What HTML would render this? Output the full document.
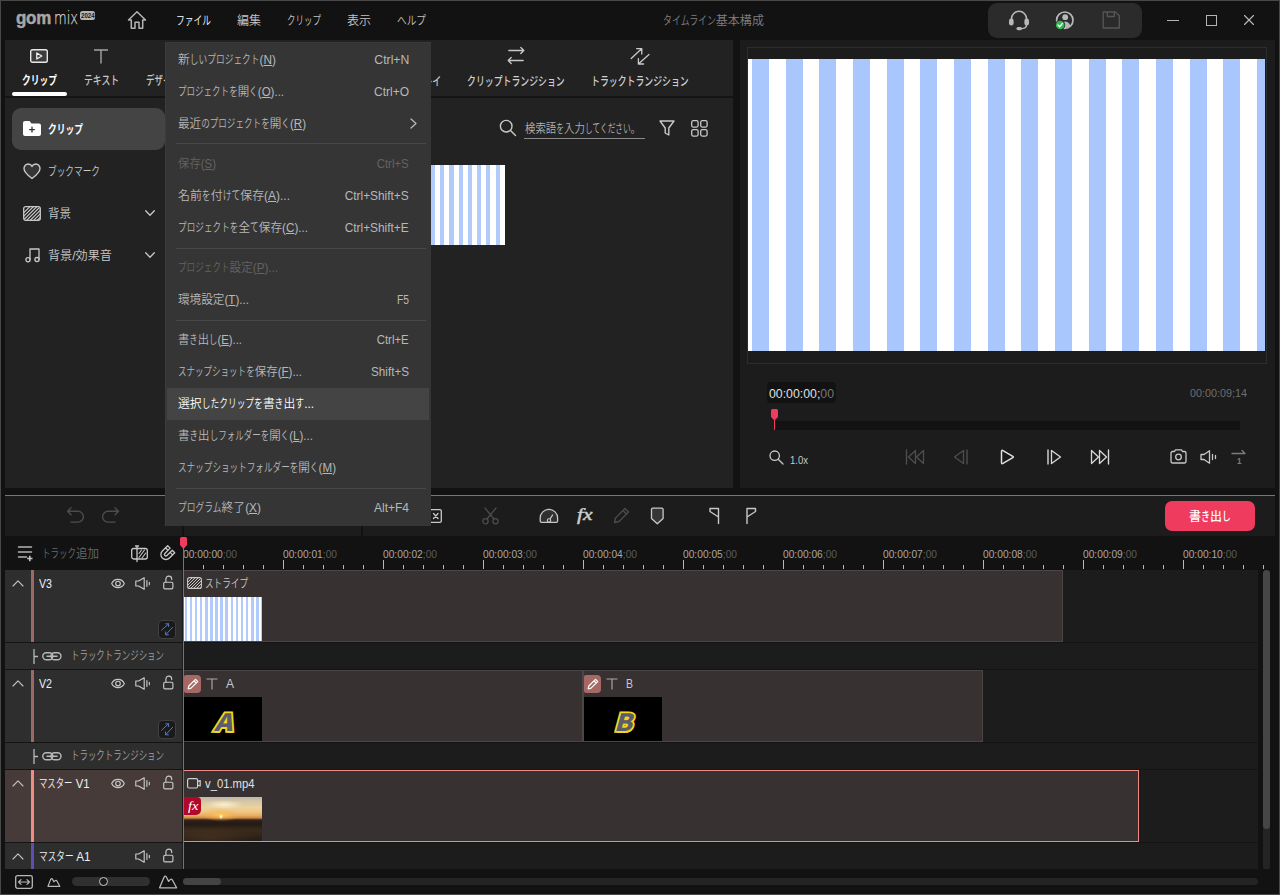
<!DOCTYPE html>
<html lang="ja"><head><meta charset="utf-8"><title>GOM Mix</title>
<style>
*{margin:0;padding:0;box-sizing:border-box}
html,body{width:1280px;height:895px;overflow:hidden;background:#121212}
body{position:relative;font-family:"Liberation Sans","Noto Sans CJK JP",sans-serif;font-size:12px;color:#ccc}
.a{position:absolute}
.t{font-weight:350;position:absolute;white-space:nowrap;line-height:20px;height:20px;transform-origin:0 50%}
svg{position:absolute;overflow:visible}
u{text-decoration:underline;text-underline-offset:1px}
.d{color:#777}
.k{display:inline-block;transform:scaleX(.74);transform-origin:0 50%}

</style></head>
<body>
<div class="a" style="left:0px;top:0px;width:1280px;height:895px;background:#121212;"></div>
<div class="a" style="left:0px;top:0px;width:1280px;height:1px;background:#484848;"></div>
<div class="a" style="left:0px;top:0px;width:1px;height:895px;background:#484848;"></div>
<div class="a" style="left:1279px;top:0px;width:1px;height:895px;background:#484848;"></div>
<div class="a" style="left:0px;top:894px;width:1280px;height:1px;background:#484848;"></div>
<span class="t" id="L0" style="left:16px;top:7.600000000000001px;font-size:19px;color:#a6a6a6;font-weight:700;font-family:'Liberation Sans',sans-serif;transform:scaleX(0.892);letter-spacing:-0.3px;-webkit-text-stroke:0.5px #a6a6a6;">gom</span>
<span class="t" id="L1" style="left:53.5px;top:7.5px;font-size:18px;color:#d4d4d4;font-weight:200;font-family:'DejaVu Sans',sans-serif;transform:scaleX(0.723);-webkit-text-stroke:0.25px #d4d4d4;">mix</span>
<div class="a" style="left:80px;top:11px;width:15px;height:8.5px;background:#b4b4b4;border-radius:2.5px;"></div>
<span class="t" id="L2" style="left:81px;top:5.5px;font-size:7px;color:#141414;font-weight:700;font-family:'Liberation Sans',sans-serif;transform:scaleX(0.867);">2024</span>
<svg style="left:127px;top:10px;" width="20" height="20" viewBox="0 0 20 20" fill="none" stroke-linecap="round" stroke-linejoin="round"><path d="M1.5 10 L10 1.8 L18.5 10 H15.7 V18.3 H12 V12.3 H8 V18.3 H4.3 V10 Z" stroke="#b4b4b4" stroke-width="1.5"/></svg>
<span class="t" id="L3" style="left:176px;top:11.0px;font-size:12px;color:#ffffff;transform:scaleX(0.985);"><span class="k" style="margin-right:-12.48px">ファイル</span></span>
<span class="t" id="L4" style="left:237px;top:11.0px;font-size:12px;color:#c4c4c4;">編集</span>
<span class="t" id="L5" style="left:287px;top:11.0px;font-size:12px;color:#c4c4c4;transform:scaleX(0.956);"><span class="k" style="margin-right:-12.48px">クリップ</span></span>
<span class="t" id="L6" style="left:347px;top:11.0px;font-size:12px;color:#c4c4c4;">表示</span>
<span class="t" id="L7" style="left:397px;top:11.0px;font-size:12px;color:#c4c4c4;transform:scaleX(1.088);"><span class="k" style="margin-right:-9.36px">ヘルプ</span></span>
<span class="t" id="L8" style="left:663px;top:11.0px;font-size:12px;color:#808080;transform:scaleX(1.005);"><span class="k" style="margin-right:-18.72px">タイムライン</span>基本構成</span>
<div class="a" style="left:988px;top:2.5px;width:154px;height:35px;background:#2b2b2b;border-radius:9px;"></div>
<svg style="left:1008px;top:9px;" width="22" height="22" viewBox="0 0 22 22" fill="none" stroke-linecap="round" stroke-linejoin="round"><path d="M3.5 12 V9.8 a7.5 7.5 0 0 1 15 0 V12" stroke="#b8b8b8" stroke-width="1.6"/><rect x="1" y="9.5" width="4.6" height="7" rx="2.2" fill="#b8b8b8"/><rect x="16.4" y="9.5" width="4.6" height="7" rx="2.2" fill="#b8b8b8"/><path d="M18.5 16 q0 3.6 -5.5 3.6" stroke="#b8b8b8" stroke-width="1.4"/><rect x="8.5" y="18" width="5.5" height="3.2" rx="1.6" fill="#b8b8b8"/></svg>
<svg style="left:1054px;top:9px;" width="22" height="22" viewBox="0 0 22 22" fill="none" stroke-linecap="round" stroke-linejoin="round"><defs><clipPath id="uc"><circle cx="10.8" cy="11.2" r="8"/></clipPath></defs><circle cx="10.8" cy="11.2" r="8.2" stroke="#b8b8b8" stroke-width="1.7"/><circle cx="11.2" cy="8.2" r="2.9" fill="#b8b8b8"/><path d="M5.5 20 q0.5 -7.5 5.7 -7.5 q5.2 0 5.7 7.5 Z" fill="#b8b8b8" clip-path="url(#uc)"/><circle cx="6.2" cy="16" r="5" fill="#2b2b2b"/><circle cx="6.2" cy="16" r="4.3" fill="#2dbb4e"/><path d="M4 16 l1.6 1.7 l2.8 -3.2" stroke="#fff" stroke-width="1.3"/></svg>
<svg style="left:1102px;top:11px;" width="19" height="18" viewBox="0 0 19 18" fill="none" stroke-linecap="round" stroke-linejoin="round"><path d="M1.2 1 H13.5 L17.3 4.8 V17 H1.2 Z M5.3 1 V5.5 H12.3 V1" stroke="#555" stroke-width="1.4"/></svg>
<div class="a" style="left:1167px;top:20px;width:12px;height:1px;background:#b4b4b4;"></div>
<div class="a" style="left:1205.5px;top:14.5px;width:11px;height:11px;background:transparent;border:1.2px solid #b4b4b4;"></div>
<svg style="left:1244px;top:15px;" width="10" height="10" viewBox="0 0 10 10" fill="none" stroke-linecap="round" stroke-linejoin="round"><path d="M0.5 0.5 L9.5 9.5 M9.5 0.5 L0.5 9.5" stroke="#bcbcbc" stroke-width="1.1"/></svg>
<div class="a" style="left:5px;top:40px;width:728px;height:448px;background:#222222;"></div>
<div class="a" style="left:5px;top:96px;width:728px;height:2px;background:#141414;"></div>
<svg style="left:30px;top:49px;" width="18" height="14" viewBox="0 0 18 14" fill="none" stroke-linecap="round" stroke-linejoin="round"><rect x="0.7" y="0.7" width="16.6" height="12.6" rx="1.8" fill="#3c3c3c" stroke="#e8e8e8" stroke-width="1.4"/><path d="M6.8 4 L11.8 7 L6.8 10 Z" stroke="#f0f0f0" stroke-width="1.3"/></svg>
<span class="t" id="L9" style="left:22px;top:71.0px;font-size:12px;color:#ffffff;font-weight:700;transform:scaleX(0.985);"><span class="k" style="margin-right:-12.48px">クリップ</span></span>
<div class="a" style="left:12px;top:92px;width:55px;height:4px;background:#ffffff;border-radius:2px;"></div>
<svg style="left:93px;top:48px;" width="16" height="16" viewBox="0 0 16 16" fill="none" stroke-linecap="round" stroke-linejoin="round"><path d="M1 2 H15 M8 2 V15.5" stroke="#a4a4a4" stroke-width="1.4" stroke-linecap="butt"/></svg>
<span class="t" id="L10" style="left:84px;top:71.0px;font-size:12px;color:#c8c8c8;font-weight:500;transform:scaleX(0.995);"><span class="k" style="margin-right:-12.48px">テキスト</span></span>
<span class="t" id="L11" style="left:146px;top:71.0px;font-size:12px;color:#c8c8c8;font-weight:500;transform:scaleX(0.956);"><span class="k" style="margin-right:-12.48px">デザイン</span></span>
<span class="t" id="L12" style="left:387.5px;top:72.0px;font-size:12px;color:#c8c8c8;font-weight:500;"><span class="k" style="margin-right:-18.72px">オーバーレイ</span></span>
<svg style="left:507px;top:46px;" width="18" height="18" viewBox="0 0 18 18" fill="none" stroke-linecap="round" stroke-linejoin="round"><path d="M1.8 4.5 H16.8 M13.8 1.5 L16.8 4.5 L13.8 7.5 M16.2 14.5 H1.2 M4.2 11.5 L1.2 14.5 L4.2 17.5" stroke="#c8c8c8" stroke-width="1.3"/></svg>
<span class="t" id="L13" style="left:467px;top:72.0px;font-size:12px;color:#d0d0d0;font-weight:500;"><span class="k" style="margin-right:-34.32px">クリップトランジション</span></span>
<svg style="left:629px;top:46px;" width="22" height="20" viewBox="0 0 22 20" fill="none" stroke-linecap="round" stroke-linejoin="round"><path d="M2.2 12.5 L12.8 2.6 M7.6 2.6 H12.8 V8 M20 8.5 L9.4 18 M14.6 18 H9.4 V12.6" stroke="#c8c8c8" stroke-width="1.3"/></svg>
<span class="t" id="L14" style="left:591px;top:72.0px;font-size:12px;color:#d0d0d0;font-weight:500;"><span class="k" style="margin-right:-34.32px">トラックトランジション</span></span>
<div class="a" style="left:12px;top:108px;width:153px;height:42px;background:#444444;border-radius:9px;"></div>
<svg style="left:23px;top:121px;" width="18" height="15" viewBox="0 0 18 15" fill="none" stroke-linecap="round" stroke-linejoin="round"><path d="M0 2 a2 2 0 0 1 2 -2 H6.5 L8.5 2.5 H16 a2 2 0 0 1 2 2 V13 a2 2 0 0 1 -2 2 H2 a2 2 0 0 1 -2 -2 Z" fill="#fff"/><path d="M9 6.2 V11 M6.6 8.6 H11.4" stroke="#333" stroke-width="1.3"/></svg>
<span class="t" id="L15" style="left:48px;top:120.0px;font-size:12px;color:#ffffff;font-weight:700;transform:scaleX(0.985);"><span class="k" style="margin-right:-12.48px">クリップ</span></span>
<svg style="left:23px;top:163px;" width="18" height="17" viewBox="0 0 18 17" fill="none" stroke-linecap="round" stroke-linejoin="round"><path d="M9 15.5 C3 11 1 8.5 1 5.5 C1 3 3 1 5.2 1 C7 1 8.3 2 9 3.4 C9.7 2 11 1 12.8 1 C15 1 17 3 17 5.5 C17 8.5 15 11 9 15.5 Z" fill="#363636" stroke="#c8c8c8" stroke-width="1.4"/></svg>
<span class="t" id="L16" style="left:48px;top:162.0px;font-size:12px;color:#c8c8c8;transform:scaleX(0.976);"><span class="k" style="margin-right:-18.72px">ブックマーク</span></span>
<svg style="left:23px;top:206px;" width="18" height="15" viewBox="0 0 18 15" fill="none" stroke-linecap="round" stroke-linejoin="round"><defs><clipPath id="hc"><rect x="1" y="1" width="16" height="13" rx="1.5"/></clipPath></defs><rect x="0.7" y="0.7" width="16.6" height="13.6" rx="2" stroke="#c8c8c8" stroke-width="1.3"/><g clip-path="url(#hc)" stroke="#c8c8c8" stroke-width="1.2"><path d="M-4 15 L11 0 M-0.5 15 L14.5 0 M3 15 L18 0 M6.5 15 L21.5 0 M10 15 L25 0 M13.5 15 L28.5 0 M-7.5 15 L7.5 0"/></g></svg>
<span class="t" id="L17" style="left:48px;top:204.0px;font-size:12px;color:#c8c8c8;transform:scaleX(0.958);">背景</span>
<svg style="left:145px;top:210px;" width="10" height="7" viewBox="0 0 10 7" fill="none" stroke-linecap="round" stroke-linejoin="round"><path d="M0.7 0.8 L5 5.2 L9.3 0.8" stroke="#c8c8c8" stroke-width="1.3"/></svg>
<svg style="left:24.5px;top:248px;" width="16" height="15" viewBox="0 0 16 15" fill="none" stroke-linecap="round" stroke-linejoin="round"><path d="M5 11.5 V1 H14 V11.3" stroke="#c8c8c8" stroke-width="1.3"/><circle cx="3" cy="11.8" r="2.1" stroke="#c8c8c8" stroke-width="1.3"/><circle cx="12" cy="11.6" r="2.1" stroke="#c8c8c8" stroke-width="1.3"/></svg>
<span class="t" id="L18" style="left:48px;top:246.0px;font-size:12px;color:#c8c8c8;transform:scaleX(1.010);">背景/効果音</span>
<svg style="left:145px;top:252px;" width="10" height="7" viewBox="0 0 10 7" fill="none" stroke-linecap="round" stroke-linejoin="round"><path d="M0.7 0.8 L5 5.2 L9.3 0.8" stroke="#c8c8c8" stroke-width="1.3"/></svg>
<svg style="left:499px;top:119px;" width="18" height="18" viewBox="0 0 18 18" fill="none" stroke-linecap="round" stroke-linejoin="round"><circle cx="7.2" cy="7.2" r="5.8" stroke="#c8c8c8" stroke-width="1.4"/><path d="M11.5 11.5 L16.5 16.5" stroke="#c8c8c8" stroke-width="1.4"/></svg>
<span class="t" id="L19" style="left:525px;top:119.0px;font-size:12px;color:#b0b0b0;transform:scaleX(0.869);">検索語<span class="k" style="margin-right:-3.12px">を</span>入力<span class="k" style="margin-right:-18.72px">してください</span>。</span>
<div class="a" style="left:524px;top:138px;width:121px;height:1px;background:#8a8a8a;"></div>
<svg style="left:659px;top:120px;" width="16" height="17" viewBox="0 0 16 17" fill="none" stroke-linecap="round" stroke-linejoin="round"><path d="M1 1 H15 L9.8 8 V15 L6.2 13 V8 Z" stroke="#c8c8c8" stroke-width="1.4"/></svg>
<svg style="left:691px;top:120px;" width="17" height="17" viewBox="0 0 17 17" fill="none" stroke-linecap="round" stroke-linejoin="round"><rect x="0.7" y="0.7" width="6.4" height="6.4" rx="1.5" stroke="#c8c8c8" stroke-width="1.3"/><rect x="9.7" y="0.7" width="6.4" height="6.4" rx="1.5" stroke="#c8c8c8" stroke-width="1.3"/><rect x="0.7" y="9.7" width="6.4" height="6.4" rx="1.5" stroke="#c8c8c8" stroke-width="1.3"/><rect x="9.7" y="9.7" width="6.4" height="6.4" rx="1.5" stroke="#c8c8c8" stroke-width="1.3"/></svg>
<div class="a" style="left:365px;top:165px;width:140px;height:80px;background:#fff;background:repeating-linear-gradient(90deg,#fff 0,#fff 1.6px,#b0cbfc 1.6px,#b0cbfc 5.7px,#fff 5.7px,#fff 9.21px);"></div>
<div class="a" style="left:740px;top:40px;width:535px;height:448px;background:#1c1c1c;"></div>
<div class="a" style="left:747px;top:47px;width:520px;height:317px;background:#1c1c1c;border:1px solid #2d2d2d;"></div>
<div class="a" style="left:748px;top:59px;width:517px;height:292px;background:#fff;background:repeating-linear-gradient(90deg,#fff 0,#fff 4px,#aac7fd 4px,#aac7fd 20.9px,#fff 20.9px,#fff 33.67px);"></div>
<div class="a" style="left:767px;top:382px;width:69px;height:21px;background:#121212;border-radius:4px;"></div>
<span class="t" id="L20" style="left:769px;top:384.0px;font-size:12px;color:#e0e0e0;font-family:'Liberation Sans',sans-serif;transform:scaleX(1.025);">00:00:00;<span style="color:#777">00</span></span>
<span class="t" id="L21" style="left:1190px;top:383.0px;font-size:11px;color:#6e6e6e;font-family:'Liberation Sans',sans-serif;transform:scaleX(0.981);">00:00:09;14</span>
<div class="a" style="left:774px;top:421px;width:466px;height:9px;background:#121212;"></div>
<svg style="left:771px;top:409px;" width="7" height="21" viewBox="0 0 7 21" fill="none" stroke-linecap="round" stroke-linejoin="round"><path d="M0 1.5 a1.5 1.5 0 0 1 1.5 -1.5 H5.5 a1.5 1.5 0 0 1 1.5 1.5 V8 L4 11 H3 L0 8 Z" fill="#ef3b5d"/><path d="M3.5 10 V21" stroke="#ef3b5d" stroke-width="1" stroke-linecap="butt"/></svg>
<svg style="left:769px;top:450px;" width="15" height="15" viewBox="0 0 15 15" fill="none" stroke-linecap="round" stroke-linejoin="round"><circle cx="5.7" cy="5.7" r="4.7" stroke="#c8c8c8" stroke-width="1.3"/><path d="M9.2 9.2 L14 14" stroke="#c8c8c8" stroke-width="1.3"/></svg>
<span class="t" id="L22" style="left:790px;top:450.0px;font-size:11px;color:#c8c8c8;font-family:'Liberation Sans',sans-serif;transform:scaleX(0.866);">1.0x</span>
<svg style="left:905px;top:449px;" width="20" height="16" viewBox="0 0 20 16" fill="none" stroke-linecap="round" stroke-linejoin="round"><path d="M1.5 1 V15" stroke="#4e4e4e" stroke-width="1.4"/><path d="M10.5 1.5 L3.5 8 L10.5 14.5 Z" stroke="#4e4e4e" stroke-width="1.3"/><path d="M18.5 1.5 L11.5 8 L18.5 14.5 Z" stroke="#4e4e4e" stroke-width="1.3"/></svg>
<svg style="left:953px;top:449px;" width="16" height="16" viewBox="0 0 16 16" fill="none" stroke-linecap="round" stroke-linejoin="round"><path d="M10.5 1.5 L1.5 8 L10.5 14.5 Z" stroke="#4e4e4e" stroke-width="1.3"/><path d="M14 1 V15" stroke="#4e4e4e" stroke-width="1.4"/></svg>
<svg style="left:1000px;top:449px;" width="15" height="17" viewBox="0 0 15 17" fill="none" stroke-linecap="round" stroke-linejoin="round"><path d="M1.5 2.5 Q1.5 0.8 3 1.6 L12.8 7.3 Q13.8 8 12.8 8.7 L3 14.4 Q1.5 15.2 1.5 13.5 Z" stroke="#e0e0e0" stroke-width="1.5"/></svg>
<svg style="left:1045.5px;top:449px;" width="16" height="16" viewBox="0 0 16 16" fill="none" stroke-linecap="round" stroke-linejoin="round"><path d="M2 1 V15" stroke="#d8d8d8" stroke-width="1.4"/><path d="M5.5 1.5 L14.5 8 L5.5 14.5 Z" stroke="#d8d8d8" stroke-width="1.3"/></svg>
<svg style="left:1090px;top:449px;" width="20" height="16" viewBox="0 0 20 16" fill="none" stroke-linecap="round" stroke-linejoin="round"><path d="M1.5 1.5 L8.5 8 L1.5 14.5 Z" stroke="#d8d8d8" stroke-width="1.3"/><path d="M9.5 1.5 L16.5 8 L9.5 14.5 Z" stroke="#d8d8d8" stroke-width="1.3"/><path d="M18.5 1 V15" stroke="#d8d8d8" stroke-width="1.4"/></svg>
<svg style="left:1170px;top:449px;" width="17" height="15" viewBox="0 0 17 15" fill="none" stroke-linecap="round" stroke-linejoin="round"><path d="M1 4 a1.5 1.5 0 0 1 1.5 -1.5 H4.5 L5.5 0.8 H11.5 L12.5 2.5 H14.5 a1.5 1.5 0 0 1 1.5 1.5 V12.5 a1.5 1.5 0 0 1 -1.5 1.5 H2.5 a1.5 1.5 0 0 1 -1.5 -1.5 Z" stroke="#c8c8c8" stroke-width="1.3"/><circle cx="8.5" cy="8" r="2.8" stroke="#c8c8c8" stroke-width="1.3"/></svg>
<svg style="left:1200px;top:450px;" width="17" height="14" viewBox="0 0 17 14" fill="none" stroke-linecap="round" stroke-linejoin="round"><path d="M1 4.5 H4 L9.5 0.8 V13.2 L4 9.5 H1 Z" stroke="#c8c8c8" stroke-width="1.3"/><path d="M12.5 4.5 V9.5 M15.5 5.5 V8.5" stroke="#c8c8c8" stroke-width="1.3"/></svg>
<svg style="left:1231px;top:449px;" width="16" height="16" viewBox="0 0 16 16" fill="none" stroke-linecap="round" stroke-linejoin="round"><path d="M1 4.5 H14 M11 1.5 L14 4.5" stroke="#7c7c7c" stroke-width="1.3"/></svg>
<span class="t" id="L23" style="left:1236.5px;top:451.0px;font-size:9px;color:#7c7c7c;font-weight:700;font-family:'Liberation Sans',sans-serif;transform:scaleX(0.897);">1</span>
<div class="a" style="left:5px;top:495px;width:1270px;height:1px;background:#f03c5e;"></div>
<div class="a" style="left:5px;top:496px;width:1270px;height:40px;background:#1c1c1c;"></div>
<div class="a" style="left:182px;top:496px;width:2px;height:40px;background:#121212;"></div>
<div class="a" style="left:361px;top:496px;width:2px;height:40px;background:#121212;"></div>
<svg style="left:66px;top:507px;" width="19" height="16" viewBox="0 0 19 16" fill="none" stroke-linecap="round" stroke-linejoin="round"><path d="M5 0.8 L1.5 4.3 L5 7.8 M1.5 4.3 H12 a5.4 5.4 0 0 1 0 10.8 H5" stroke="#4c4c4c" stroke-width="1.4"/></svg>
<svg style="left:101px;top:507px;" width="19" height="16" viewBox="0 0 19 16" fill="none" stroke-linecap="round" stroke-linejoin="round"><path d="M14 0.8 L17.5 4.3 L14 7.8 M17.5 4.3 H7 a5.4 5.4 0 0 0 0 10.8 H14" stroke="#4c4c4c" stroke-width="1.4"/></svg>
<svg style="left:425.5px;top:509px;" width="16" height="14" viewBox="0 0 16 14" fill="none" stroke-linecap="round" stroke-linejoin="round"><path d="M5 0.7 H14 a1.3 1.3 0 0 1 1.3 1.3 V12 a1.3 1.3 0 0 1 -1.3 1.3 H5 L0.7 7 Z" stroke="#c8c8c8" stroke-width="1.3"/><path d="M7.5 4.5 L12 9.5 M12 4.5 L7.5 9.5" stroke="#c8c8c8" stroke-width="1.3"/></svg>
<svg style="left:482px;top:507px;" width="17" height="18" viewBox="0 0 17 18" fill="none" stroke-linecap="round" stroke-linejoin="round"><path d="M3 1 L12 12 M14 1 L5 12" stroke="#4c4c4c" stroke-width="1.3"/><circle cx="3.5" cy="14.3" r="2.6" stroke="#4c4c4c" stroke-width="1.3"/><circle cx="13.5" cy="14.3" r="2.6" stroke="#4c4c4c" stroke-width="1.3"/></svg>
<svg style="left:539px;top:508px;" width="20" height="16" viewBox="0 0 20 16" fill="none" stroke-linecap="round" stroke-linejoin="round"><path d="M1.2 13 V10 a8.7 8.7 0 0 1 17.4 0 V13 a1.3 1.3 0 0 1 -1.3 1.3 H2.5 a1.3 1.3 0 0 1 -1.3 -1.3 Z" fill="#303030" stroke="#c8c8c8" stroke-width="1.3"/><path d="M10.6 11.6 L13.6 7" stroke="#c8c8c8" stroke-width="1.3"/><circle cx="10" cy="12.4" r="1.7" fill="#303030" stroke="#c8c8c8" stroke-width="1.1"/></svg>
<span class="t" id="L24" style="left:577px;top:504.5px;font-size:16px;color:#cccccc;font-family:'Liberation Serif',serif;transform:scaleX(1.342);-webkit-text-stroke:0.45px #cccccc;"><i>fx</i></span>
<svg style="left:613px;top:507px;" width="17" height="17" viewBox="0 0 17 17" fill="none" stroke-linecap="round" stroke-linejoin="round"><path d="M1.5 15.5 L2.5 11 L12 1.5 L15.5 5 L6 14.5 Z M10 3.5 L13.5 7" stroke="#4c4c4c" stroke-width="1.3"/></svg>
<svg style="left:650px;top:507px;" width="15" height="18" viewBox="0 0 15 18" fill="none" stroke-linecap="round" stroke-linejoin="round"><path d="M2.8 1.2 H11.8 a1.3 1.3 0 0 1 1.3 1.3 V11.5 L7.3 16.8 L1.5 11.5 V2.5 a1.3 1.3 0 0 1 1.3 -1.3 Z" fill="#363636" stroke="#c8c8c8" stroke-width="1.3"/></svg>
<svg style="left:708px;top:507px;" width="12" height="18" viewBox="0 0 12 18" fill="none" stroke-linecap="round" stroke-linejoin="round"><path d="M10.5 16.5 V1.5 H2 V4.5 L10.5 10" stroke="#c8c8c8" stroke-width="1.4"/></svg>
<svg style="left:745px;top:507px;" width="12" height="18" viewBox="0 0 12 18" fill="none" stroke-linecap="round" stroke-linejoin="round"><path d="M2 16.5 V1.5 H10.5 V4.5 L2 10" stroke="#c8c8c8" stroke-width="1.4"/></svg>
<div class="a" style="left:1165px;top:501px;width:90px;height:30px;background:#ef3b5d;border-radius:7px;"></div>
<span class="t" id="L25" style="left:1189px;top:507.0px;font-size:12px;color:#ffffff;font-weight:500;">書<span class="k" style="margin-right:-3.12px">き</span>出<span class="k" style="margin-right:-3.12px">し</span></span>
<div class="a" style="left:5px;top:536px;width:1270px;height:34px;background:#121212;"></div>
<svg style="left:17px;top:545px;" width="18" height="17" viewBox="0 0 18 17" fill="none" stroke-linecap="round" stroke-linejoin="round"><path d="M1.5 2 H14.5 M1.5 7 H14.5 M1.5 12 H9.5" stroke="#b4b4b4" stroke-width="1.5"/><path d="M12.8 10.8 V16.2 M10.1 13.5 H15.5" stroke="#c4c4c4" stroke-width="1.6" stroke-linecap="butt"/></svg>
<span class="t" id="L26" style="left:42px;top:544.0px;font-size:12px;color:#6a6a6a;transform:scaleX(0.957);"><span class="k" style="margin-right:-12.48px">トラック</span>追加</span>
<svg style="left:131px;top:545px;" width="17" height="17" viewBox="0 0 17 17" fill="none" stroke-linecap="round" stroke-linejoin="round"><rect x="0.7" y="3.5" width="15.6" height="10.5" rx="2" stroke="#c8c8c8" stroke-width="1.3"/><path d="M6 1 V16.5 M4.5 1 H7.5" stroke="#c8c8c8" stroke-width="1.3"/><path d="M8 12.5 L13.5 5 M11 13 L14.8 8 M8 8.5 L10.5 5" stroke="#c8c8c8" stroke-width="1.1"/></svg>
<svg style="left:159px;top:544px;" width="18" height="18" viewBox="0 0 18 18" fill="none" stroke-linecap="round" stroke-linejoin="round"><g transform="translate(7.6,9.8) rotate(45) translate(-5.5,-7)"><path d="M0.5 0.5 H4 V8 a1.5 1.5 0 0 0 3 0 V0.5 H10.5 V8 a5 5 0 0 1 -10 0 Z M0.5 3.5 H4 M7 3.5 H10.5" stroke="#c8c8c8" stroke-width="1.3"/></g></svg>
<svg style="left:0;top:0" width="1280" height="895" stroke="#b8b8b8" stroke-width="1" stroke-linecap="butt"><path d="M183.5 560 V569"/><path d="M203.5 565 V569"/><path d="M223.5 565 V569"/><path d="M243.5 565 V569"/><path d="M263.5 565 V569"/><path d="M283.5 560 V569"/><path d="M303.5 565 V569"/><path d="M323.5 565 V569"/><path d="M343.5 565 V569"/><path d="M363.5 565 V569"/><path d="M383.5 560 V569"/><path d="M403.5 565 V569"/><path d="M423.5 565 V569"/><path d="M443.5 565 V569"/><path d="M463.5 565 V569"/><path d="M483.5 560 V569"/><path d="M503.5 565 V569"/><path d="M523.5 565 V569"/><path d="M543.5 565 V569"/><path d="M563.5 565 V569"/><path d="M583.5 560 V569"/><path d="M603.5 565 V569"/><path d="M623.5 565 V569"/><path d="M643.5 565 V569"/><path d="M663.5 565 V569"/><path d="M683.5 560 V569"/><path d="M703.5 565 V569"/><path d="M723.5 565 V569"/><path d="M743.5 565 V569"/><path d="M763.5 565 V569"/><path d="M783.5 560 V569"/><path d="M803.5 565 V569"/><path d="M823.5 565 V569"/><path d="M843.5 565 V569"/><path d="M863.5 565 V569"/><path d="M883.5 560 V569"/><path d="M903.5 565 V569"/><path d="M923.5 565 V569"/><path d="M943.5 565 V569"/><path d="M963.5 565 V569"/><path d="M983.5 560 V569"/><path d="M1003.5 565 V569"/><path d="M1023.5 565 V569"/><path d="M1043.5 565 V569"/><path d="M1063.5 565 V569"/><path d="M1083.5 560 V569"/><path d="M1103.5 565 V569"/><path d="M1123.5 565 V569"/><path d="M1143.5 565 V569"/><path d="M1163.5 565 V569"/><path d="M1183.5 560 V569"/><path d="M1203.5 565 V569"/><path d="M1223.5 565 V569"/><path d="M1243.5 565 V569"/><path d="M1263.5 565 V569"/></svg>
<span class="t" id="L27" style="left:183px;top:544.5px;font-size:10px;color:#a8a8a8;font-family:'Liberation Sans',sans-serif;transform:scaleX(1.022);">00:00:00<span style="color:#5c5c5c">;00</span></span>
<span class="t" id="L28" style="left:283px;top:544.5px;font-size:10px;color:#a8a8a8;font-family:'Liberation Sans',sans-serif;transform:scaleX(1.022);">00:00:01<span style="color:#5c5c5c">;00</span></span>
<span class="t" id="L29" style="left:383px;top:544.5px;font-size:10px;color:#a8a8a8;font-family:'Liberation Sans',sans-serif;transform:scaleX(1.022);">00:00:02<span style="color:#5c5c5c">;00</span></span>
<span class="t" id="L30" style="left:483px;top:544.5px;font-size:10px;color:#a8a8a8;font-family:'Liberation Sans',sans-serif;transform:scaleX(1.022);">00:00:03<span style="color:#5c5c5c">;00</span></span>
<span class="t" id="L31" style="left:583px;top:544.5px;font-size:10px;color:#a8a8a8;font-family:'Liberation Sans',sans-serif;transform:scaleX(1.022);">00:00:04<span style="color:#5c5c5c">;00</span></span>
<span class="t" id="L32" style="left:683px;top:544.5px;font-size:10px;color:#a8a8a8;font-family:'Liberation Sans',sans-serif;transform:scaleX(1.022);">00:00:05<span style="color:#5c5c5c">;00</span></span>
<span class="t" id="L33" style="left:783px;top:544.5px;font-size:10px;color:#a8a8a8;font-family:'Liberation Sans',sans-serif;transform:scaleX(1.022);">00:00:06<span style="color:#5c5c5c">;00</span></span>
<span class="t" id="L34" style="left:883px;top:544.5px;font-size:10px;color:#a8a8a8;font-family:'Liberation Sans',sans-serif;transform:scaleX(1.022);">00:00:07<span style="color:#5c5c5c">;00</span></span>
<span class="t" id="L35" style="left:983px;top:544.5px;font-size:10px;color:#a8a8a8;font-family:'Liberation Sans',sans-serif;transform:scaleX(1.022);">00:00:08<span style="color:#5c5c5c">;00</span></span>
<span class="t" id="L36" style="left:1083px;top:544.5px;font-size:10px;color:#a8a8a8;font-family:'Liberation Sans',sans-serif;transform:scaleX(1.022);">00:00:09<span style="color:#5c5c5c">;00</span></span>
<span class="t" id="L37" style="left:1183px;top:544.5px;font-size:10px;color:#a8a8a8;font-family:'Liberation Sans',sans-serif;transform:scaleX(1.022);">00:00:10<span style="color:#5c5c5c">;00</span></span>
<div class="a" style="left:5px;top:570px;width:1253px;height:299px;background:#1c1c1c;"></div>
<div class="a" style="left:1258px;top:570px;width:17px;height:299px;background:#121212;"></div>
<div class="a" style="left:5px;top:570px;width:177px;height:72px;background:#2e2e2e;"></div><div class="a" style="left:31px;top:570px;width:3px;height:72px;background:#9c6a66;"></div><svg style="left:12px;top:580px;" width="12" height="7" viewBox="0 0 12 7" fill="none" stroke-linecap="round" stroke-linejoin="round"><path d="M1 6 L6 0.9 L11 6" stroke="#c0c0c0" stroke-width="1.15"/></svg><span class="t" id="L38" style="left:39px;top:573.5px;font-size:12px;color:#f0f0f0;transform:scaleX(0.885);">V3</span><svg style="left:111px;top:578px;" width="14" height="11" viewBox="0 0 14 11" fill="none" stroke-linecap="round" stroke-linejoin="round"><path d="M0.7 5.5 C3.2 0 10.8 0 13.3 5.5 C10.8 11 3.2 11 0.7 5.5 Z" stroke="#c8c8c8" stroke-width="1.15"/><circle cx="7" cy="5.5" r="2.3" stroke="#c8c8c8" stroke-width="1.15"/></svg><svg style="left:135px;top:577px;" width="16" height="13" viewBox="0 0 16 13" fill="none" stroke-linecap="round" stroke-linejoin="round"><path d="M0.8 4 H3.6 L9.2 0.8 V12.2 L3.6 9 H0.8 Z" stroke="#c8c8c8" stroke-width="1.15"/><path d="M11.9 3.6 V9.4 M14.3 5.3 V7.7" stroke="#c8c8c8" stroke-width="1.15"/></svg><svg style="left:162.5px;top:575px;" width="12" height="15" viewBox="0 0 12 15" fill="none" stroke-linecap="round" stroke-linejoin="round"><rect x="0.7" y="7.2" width="9.2" height="6.6" rx="1.3" stroke="#c8c8c8" stroke-width="1.15"/><path d="M2.9 7 V4 a2.9 2.9 0 0 1 5.8 0 V4.6" stroke="#c8c8c8" stroke-width="1.15"/></svg><div class="a" style="left:158px;top:620px;width:18px;height:19px;background:#1a1a1a;border:1px solid #404040;border-radius:4px;"></div><svg style="left:160px;top:623px;" width="14" height="13" viewBox="0 0 14 13" fill="none" stroke-linecap="round" stroke-linejoin="round"><path d="M1.6 7.2 L8.6 0.8 M5.8 0.8 H8.6 V3.6 M12.6 4.4 L5.6 11.8 M8.4 11.8 H5.6 V9" stroke="#5577cc" stroke-width="1"/></svg>
<div class="a" style="left:5px;top:643px;width:177px;height:26px;background:#2e2e2e;"></div><svg style="left:33px;top:649px;" width="6" height="15" viewBox="0 0 6 15" fill="none" stroke-linecap="round" stroke-linejoin="round"><path d="M1 0 V15 M1 7.5 H5" stroke="#b8b8b8" stroke-width="1.3" stroke-linecap="butt"/></svg><svg style="left:42px;top:652px;" width="20" height="9" viewBox="0 0 20 9" fill="none" stroke-linecap="round" stroke-linejoin="round"><rect x="0.8" y="0.8" width="10" height="7" rx="3.5" stroke="#b8b8b8" stroke-width="1.4"/><rect x="9" y="0.8" width="10" height="7" rx="3.5" stroke="#b8b8b8" stroke-width="1.4"/><path d="M5 4.3 H15" stroke="#b8b8b8" stroke-width="1.4"/></svg><span class="t" id="L39" style="left:71px;top:646.0px;font-size:12px;color:#a0a0a0;transform:scaleX(0.952);"><span class="k" style="margin-right:-34.32px">トラックトランジション</span></span><div class="a" style="left:5px;top:642px;width:1253px;height:1px;background:#141414;"></div><div class="a" style="left:5px;top:669px;width:1253px;height:1px;background:#141414;"></div>
<div class="a" style="left:5px;top:670px;width:177px;height:72px;background:#2e2e2e;"></div><div class="a" style="left:31px;top:670px;width:3px;height:72px;background:#9c6a66;"></div><svg style="left:12px;top:680px;" width="12" height="7" viewBox="0 0 12 7" fill="none" stroke-linecap="round" stroke-linejoin="round"><path d="M1 6 L6 0.9 L11 6" stroke="#c0c0c0" stroke-width="1.15"/></svg><span class="t" id="L40" style="left:39px;top:673.5px;font-size:12px;color:#f0f0f0;transform:scaleX(0.885);">V2</span><svg style="left:111px;top:678px;" width="14" height="11" viewBox="0 0 14 11" fill="none" stroke-linecap="round" stroke-linejoin="round"><path d="M0.7 5.5 C3.2 0 10.8 0 13.3 5.5 C10.8 11 3.2 11 0.7 5.5 Z" stroke="#c8c8c8" stroke-width="1.15"/><circle cx="7" cy="5.5" r="2.3" stroke="#c8c8c8" stroke-width="1.15"/></svg><svg style="left:135px;top:677px;" width="16" height="13" viewBox="0 0 16 13" fill="none" stroke-linecap="round" stroke-linejoin="round"><path d="M0.8 4 H3.6 L9.2 0.8 V12.2 L3.6 9 H0.8 Z" stroke="#c8c8c8" stroke-width="1.15"/><path d="M11.9 3.6 V9.4 M14.3 5.3 V7.7" stroke="#c8c8c8" stroke-width="1.15"/></svg><svg style="left:162.5px;top:675px;" width="12" height="15" viewBox="0 0 12 15" fill="none" stroke-linecap="round" stroke-linejoin="round"><rect x="0.7" y="7.2" width="9.2" height="6.6" rx="1.3" stroke="#c8c8c8" stroke-width="1.15"/><path d="M2.9 7 V4 a2.9 2.9 0 0 1 5.8 0 V4.6" stroke="#c8c8c8" stroke-width="1.15"/></svg><div class="a" style="left:158px;top:720px;width:18px;height:19px;background:#1a1a1a;border:1px solid #404040;border-radius:4px;"></div><svg style="left:160px;top:723px;" width="14" height="13" viewBox="0 0 14 13" fill="none" stroke-linecap="round" stroke-linejoin="round"><path d="M1.6 7.2 L8.6 0.8 M5.8 0.8 H8.6 V3.6 M12.6 4.4 L5.6 11.8 M8.4 11.8 H5.6 V9" stroke="#5577cc" stroke-width="1"/></svg>
<div class="a" style="left:5px;top:743px;width:177px;height:26px;background:#2e2e2e;"></div><svg style="left:33px;top:749px;" width="6" height="15" viewBox="0 0 6 15" fill="none" stroke-linecap="round" stroke-linejoin="round"><path d="M1 0 V15 M1 7.5 H5" stroke="#b8b8b8" stroke-width="1.3" stroke-linecap="butt"/></svg><svg style="left:42px;top:752px;" width="20" height="9" viewBox="0 0 20 9" fill="none" stroke-linecap="round" stroke-linejoin="round"><rect x="0.8" y="0.8" width="10" height="7" rx="3.5" stroke="#b8b8b8" stroke-width="1.4"/><rect x="9" y="0.8" width="10" height="7" rx="3.5" stroke="#b8b8b8" stroke-width="1.4"/><path d="M5 4.3 H15" stroke="#b8b8b8" stroke-width="1.4"/></svg><span class="t" id="L41" style="left:71px;top:746.0px;font-size:12px;color:#a0a0a0;transform:scaleX(0.952);"><span class="k" style="margin-right:-34.32px">トラックトランジション</span></span><div class="a" style="left:5px;top:742px;width:1253px;height:1px;background:#141414;"></div><div class="a" style="left:5px;top:769px;width:1253px;height:1px;background:#141414;"></div>
<div class="a" style="left:5px;top:770px;width:177px;height:72px;background:#473b39;"></div><div class="a" style="left:31px;top:770px;width:3px;height:72px;background:#f28b82;"></div><svg style="left:12px;top:780px;" width="12" height="7" viewBox="0 0 12 7" fill="none" stroke-linecap="round" stroke-linejoin="round"><path d="M1 6 L6 0.9 L11 6" stroke="#c0c0c0" stroke-width="1.15"/></svg><span class="t" id="L42" style="left:39px;top:773.5px;font-size:12px;color:#f0f0f0;transform:scaleX(0.943);"><span class="k" style="margin-right:-12.48px">マスター</span> V1</span><svg style="left:111px;top:778px;" width="14" height="11" viewBox="0 0 14 11" fill="none" stroke-linecap="round" stroke-linejoin="round"><path d="M0.7 5.5 C3.2 0 10.8 0 13.3 5.5 C10.8 11 3.2 11 0.7 5.5 Z" stroke="#c8c8c8" stroke-width="1.15"/><circle cx="7" cy="5.5" r="2.3" stroke="#c8c8c8" stroke-width="1.15"/></svg><svg style="left:135px;top:777px;" width="16" height="13" viewBox="0 0 16 13" fill="none" stroke-linecap="round" stroke-linejoin="round"><path d="M0.8 4 H3.6 L9.2 0.8 V12.2 L3.6 9 H0.8 Z" stroke="#c8c8c8" stroke-width="1.15"/><path d="M11.9 3.6 V9.4 M14.3 5.3 V7.7" stroke="#c8c8c8" stroke-width="1.15"/></svg><svg style="left:162.5px;top:775px;" width="12" height="15" viewBox="0 0 12 15" fill="none" stroke-linecap="round" stroke-linejoin="round"><rect x="0.7" y="7.2" width="9.2" height="6.6" rx="1.3" stroke="#c8c8c8" stroke-width="1.15"/><path d="M2.9 7 V4 a2.9 2.9 0 0 1 5.8 0 V4.6" stroke="#c8c8c8" stroke-width="1.15"/></svg>
<div class="a" style="left:5px;top:842px;width:1253px;height:1px;background:#141414;"></div>
<div class="a" style="left:5px;top:843px;width:177px;height:26px;background:#2e2e2e;"></div><div class="a" style="left:31px;top:843px;width:3px;height:26px;background:#5b4fb3;"></div><svg style="left:12px;top:853px;" width="12" height="7" viewBox="0 0 12 7" fill="none" stroke-linecap="round" stroke-linejoin="round"><path d="M1 6 L6 0.9 L11 6" stroke="#c0c0c0" stroke-width="1.15"/></svg><span class="t" id="L43" style="left:39px;top:846.5px;font-size:12px;color:#f0f0f0;transform:scaleX(0.973);"><span class="k" style="margin-right:-12.48px">マスター</span> A1</span><svg style="left:135px;top:850px;" width="16" height="13" viewBox="0 0 16 13" fill="none" stroke-linecap="round" stroke-linejoin="round"><path d="M0.8 4 H3.6 L9.2 0.8 V12.2 L3.6 9 H0.8 Z" stroke="#c8c8c8" stroke-width="1.15"/><path d="M11.9 3.6 V9.4 M14.3 5.3 V7.7" stroke="#c8c8c8" stroke-width="1.15"/></svg><svg style="left:162.5px;top:848px;" width="12" height="15" viewBox="0 0 12 15" fill="none" stroke-linecap="round" stroke-linejoin="round"><rect x="0.7" y="7.2" width="9.2" height="6.6" rx="1.3" stroke="#c8c8c8" stroke-width="1.15"/><path d="M2.9 7 V4 a2.9 2.9 0 0 1 5.8 0 V4.6" stroke="#c8c8c8" stroke-width="1.15"/></svg>
<div class="a" style="left:184px;top:570px;width:879px;height:72px;background:#373131;border:1px solid #4b4545;border-left:none;"></div>
<svg style="left:187px;top:577px;" width="15" height="12" viewBox="0 0 15 12" fill="none" stroke-linecap="round" stroke-linejoin="round"><defs><clipPath id="h187577"><rect x="1" y="1" width="13" height="10" rx="1.5"/></clipPath></defs><rect x="0.6" y="0.6" width="13.8" height="10.8" rx="2" stroke="#c8c8c8" stroke-width="1.1"/><g clip-path="url(#h187577)" stroke="#c8c8c8" stroke-width="1"><path d="M-6 12 L6 0 M-3 12 L9 0 M0 12 L12 0 M3 12 L15 0 M6 12 L18 0 M9 12 L21 0 M12 12 L24 0"/></g></svg>
<span class="t" id="L44" style="left:205px;top:574.0px;font-size:12px;color:#c8c8c8;transform:scaleX(0.968);"><span class="k" style="margin-right:-15.60px">ストライプ</span></span>
<div class="a" style="left:184px;top:597px;width:78px;height:44px;background:#fff;background:repeating-linear-gradient(90deg,#fff 0,#fff 0.6px,#b0cbfc 0.6px,#b0cbfc 3.1px,#fff 3.1px,#fff 5.11px);"></div>
<div class="a" style="left:184px;top:670px;width:399px;height:72px;background:#373131;border:1px solid #4b4545;border-left:none;"></div>
<div class="a" style="left:184px;top:675px;width:17px;height:18px;background:#a66865;border-radius:2px 4px 4px 2px;"></div><svg style="left:186.5px;top:678px;" width="12" height="12" viewBox="0 0 12 12" fill="none" stroke-linecap="round" stroke-linejoin="round"><path d="M1.2 10.8 L1.8 8 L8.5 1.3 L10.7 3.5 L4 10.2 Z M7 2.8 L9.2 5" stroke="#fff" stroke-width="1.2"/></svg>
<svg style="left:206px;top:678px;" width="12" height="12" viewBox="0 0 12 12" fill="none" stroke-linecap="round" stroke-linejoin="round"><path d="M0.5 1 H11.5 M6 1 V11.5" stroke="#b0a8a8" stroke-width="1.15" stroke-linecap="butt"/></svg>
<span class="t" id="L45" style="left:226px;top:674.0px;font-size:12px;color:#c8c8c8;font-family:'Liberation Sans',sans-serif;">A</span>
<div class="a" style="left:184px;top:697px;width:78px;height:44px;background:#000;"></div><span class="t" id="L46" style="left:213.5px;top:710.5px;font-size:24px;color:#5c5c6c;font-weight:900;font-family:'Noto Sans CJK JP',sans-serif;transform:scaleX(1.136);-webkit-text-stroke:3.4px #f5d81a;paint-order:stroke fill;text-shadow:0.5px 1.5px 0 #f5d81a;"><i>A</i></span>
<div class="a" style="left:583px;top:670px;width:400px;height:72px;background:#373131;border:1px solid #4b4545;"></div>
<div class="a" style="left:584px;top:675px;width:17px;height:18px;background:#a66865;border-radius:2px 4px 4px 2px;"></div><svg style="left:586.5px;top:678px;" width="12" height="12" viewBox="0 0 12 12" fill="none" stroke-linecap="round" stroke-linejoin="round"><path d="M1.2 10.8 L1.8 8 L8.5 1.3 L10.7 3.5 L4 10.2 Z M7 2.8 L9.2 5" stroke="#fff" stroke-width="1.2"/></svg>
<svg style="left:606px;top:678px;" width="12" height="12" viewBox="0 0 12 12" fill="none" stroke-linecap="round" stroke-linejoin="round"><path d="M0.5 1 H11.5 M6 1 V11.5" stroke="#b0a8a8" stroke-width="1.15" stroke-linecap="butt"/></svg>
<span class="t" id="L47" style="left:626px;top:674.0px;font-size:12px;color:#c8c8c8;font-family:'Liberation Sans',sans-serif;transform:scaleX(0.873);">B</span>
<div class="a" style="left:584px;top:697px;width:78px;height:44px;background:#000;"></div><span class="t" id="L48" style="left:613.5px;top:710.5px;font-size:24px;color:#5c5c6c;font-weight:900;font-family:'Noto Sans CJK JP',sans-serif;transform:scaleX(1.079);-webkit-text-stroke:3.4px #f5d81a;paint-order:stroke fill;text-shadow:0.5px 1.5px 0 #f5d81a;"><i>B</i></span>
<div class="a" style="left:184px;top:770px;width:955px;height:72px;background:#373131;border:1px solid #f08a84;border-left:none;"></div>
<svg style="left:187px;top:778px;" width="14" height="11" viewBox="0 0 14 11" fill="none" stroke-linecap="round" stroke-linejoin="round"><rect x="0.6" y="0.6" width="10" height="9.4" rx="1.5" stroke="#d0d0d0" stroke-width="1.2"/><path d="M10.6 3.5 L13.2 2.5 V8 L10.6 7" stroke="#d0d0d0" stroke-width="1.2"/></svg>
<span class="t" id="L49" style="left:205px;top:773.5px;font-size:12px;color:#e0e0e0;font-family:'Liberation Sans',sans-serif;transform:scaleX(0.939);">v_01.mp4</span>
<div class="a" style="left:184px;top:797px;width:78px;height:44px;overflow:hidden;background:linear-gradient(180deg,#bdb6aa 0%,#d6c6a6 10%,#ecd29c 24%,#efc684 34%,#e9ae62 42%,#d08a42 47.5%,#7a4c2a 50%,#35261c 53%,#2a1e17 62%,#3a2a1b 76%,#31241a 88%,#241b13 100%)"><div class="a" style="left:20px;top:3px;width:40px;height:9px;border-radius:50%;background:radial-gradient(closest-side,rgba(255,244,214,.85),rgba(255,240,200,0))"></div><div class="a" style="left:18px;top:11px;width:38px;height:14px;border-radius:50%;background:radial-gradient(closest-side,rgba(255,200,90,.9) 0%,rgba(250,180,80,.45) 50%,rgba(240,160,70,0) 100%)"></div><div class="a" style="left:34.5px;top:16.5px;width:4px;height:5px;border-radius:50%;background:radial-gradient(closest-side,#fffbe6 0%,#ffe99a 60%,rgba(255,210,110,0) 100%)"></div><div class="a" style="left:0;top:22px;width:78px;height:8px;background:linear-gradient(180deg,rgba(40,28,22,0),rgba(34,26,20,.8) 60%,rgba(34,26,20,0))"></div><div class="a" style="left:-20px;top:30px;width:90px;height:22px;border-radius:50%;background:radial-gradient(closest-side,rgba(92,68,40,.4),rgba(80,60,36,0))"></div></div>
<div class="a" style="left:184px;top:797px;width:17px;height:18px;background:#b2072a;border-radius:0 4px 5px 0;"></div>
<span class="t" id="L50" style="left:187.5px;top:795.5px;font-size:13px;color:#fff;font-family:'Liberation Serif',serif;transform:scaleX(1.118);"><i>fx</i></span>
<svg style="left:180px;top:537px;" width="7" height="12" viewBox="0 0 7 12" fill="none" stroke-linecap="round" stroke-linejoin="round"><path d="M0 1.5 a1.5 1.5 0 0 1 1.5 -1.5 H5.5 a1.5 1.5 0 0 1 1.5 1.5 V8 L4 11.5 H3 L0 8 Z" fill="#ef3b5d"/></svg>
<div class="a" style="left:183px;top:546px;width:1px;height:323px;background:#ef3b5d;"></div>
<div class="a" style="left:1263px;top:570px;width:7px;height:300px;background:#242424;border-radius:4px;"></div>
<div class="a" style="left:1263px;top:570px;width:7px;height:259px;background:#464646;border-radius:4px;"></div>
<div class="a" style="left:5px;top:869px;width:1270px;height:25px;background:#121212;"></div>
<svg style="left:15px;top:875px;" width="18" height="14" viewBox="0 0 18 14" fill="none" stroke-linecap="round" stroke-linejoin="round"><rect x="0.7" y="0.7" width="16.6" height="12.6" rx="1.8" stroke="#b8b8b8" stroke-width="1.3"/><path d="M3.6 7 H14.4 M6 4.6 L3.6 7 L6 9.4 M12 4.6 L14.4 7 L12 9.4" stroke="#b8b8b8" stroke-width="1.2"/></svg>
<svg style="left:47px;top:877px;" width="14" height="10" viewBox="0 0 14 10" fill="none" stroke-linecap="round" stroke-linejoin="round"><path d="M1 9.3 L3.6 2.6 Q4.6 0.6 5.7 2.6 L6.9 4.8 L8.2 3.6 Q9.2 2.8 9.9 4 L12.8 9.3 Z" stroke="#b8b8b8" stroke-width="1.2"/></svg>
<div class="a" style="left:72px;top:877px;width:78px;height:9px;background:#303030;border-radius:5px;"></div>
<div class="a" style="left:99px;top:877px;width:9px;height:9px;background:#1a1a1a;border:1.3px solid #c8c8c8;border-radius:50%;"></div>
<svg style="left:158px;top:875px;" width="20" height="14" viewBox="0 0 20 14" fill="none" stroke-linecap="round" stroke-linejoin="round"><path d="M1.6 12.8 L6 2.3 Q7.2 0 8.5 2.3 L10.6 6.4 L12.2 4.6 Q13.4 3.4 14.4 5 L18.6 12.8 Z" stroke="#b8b8b8" stroke-width="1.3"/></svg>
<div class="a" style="left:183px;top:878px;width:1075px;height:7px;background:#242424;border-radius:4px;"></div>
<div class="a" style="left:183px;top:878px;width:38px;height:7px;background:#444444;border-radius:4px;"></div>
<div class="a" style="left:165px;top:42px;width:266px;height:484px;background:#353535;border-left:1px solid #3c3c3c;border-top:1px solid #3a3a3a;"></div>
<span class="t" id="L51" style="left:178px;top:50.0px;font-size:12px;color:#b8b8b8;transform:scaleX(0.982);">新<span class="k" style="margin-right:-24.96px">しいプロジェクト</span>(<u>N</u>)</span><span class="t" id="L52" style="right:871px;top:50.0px;font-size:12px;color:#b8b8b8;font-family:'Liberation Sans',sans-serif;transform-origin:100% 50%;transform:scaleX(1.019);">Ctrl+N</span>
<span class="t" id="L53" style="left:178px;top:82.0px;font-size:12px;color:#b8b8b8;transform:scaleX(0.960);"><span class="k" style="margin-right:-21.84px">プロジェクトを</span>開<span class="k" style="margin-right:-3.12px">く</span>(<u>O</u>)...</span><span class="t" id="L54" style="right:871px;top:82.0px;font-size:12px;color:#b8b8b8;font-family:'Liberation Sans',sans-serif;transform-origin:100% 50%;">Ctrl+O</span>
<span class="t" id="L55" style="left:178px;top:114.0px;font-size:12px;color:#b8b8b8;transform:scaleX(0.965);">最近<span class="k" style="margin-right:-24.96px">のプロジェクトを</span>開<span class="k" style="margin-right:-3.12px">く</span>(<u>R</u>)</span>
<svg style="left:410px;top:118px;" width="7" height="11" viewBox="0 0 7 11" fill="none" stroke-linecap="round" stroke-linejoin="round"><path d="M1 1 L6 5.5 L1 10" stroke="#b8b8b8" stroke-width="1.3"/></svg>
<div class="a" style="left:176px;top:143px;width:250px;height:1px;background:#484848;"></div>
<span class="t" id="L56" style="left:178px;top:154.0px;font-size:12px;color:#636363;transform:scaleX(0.950);">保存(<u>S</u>)</span><span class="t" id="L57" style="right:871px;top:154.0px;font-size:12px;color:#636363;font-family:'Liberation Sans',sans-serif;transform-origin:100% 50%;transform:scaleX(0.950);">Ctrl+S</span>
<span class="t" id="L58" style="left:178px;top:186.0px;font-size:12px;color:#b8b8b8;transform:scaleX(0.993);">名前<span class="k" style="margin-right:-3.12px">を</span>付<span class="k" style="margin-right:-6.24px">けて</span>保存(<u>A</u>)...</span><span class="t" id="L59" style="right:871px;top:186.0px;font-size:12px;color:#b8b8b8;font-family:'Liberation Sans',sans-serif;transform-origin:100% 50%;transform:scaleX(0.989);">Ctrl+Shift+S</span>
<span class="t" id="L60" style="left:178px;top:218.0px;font-size:12px;color:#b8b8b8;transform:scaleX(0.972);"><span class="k" style="margin-right:-21.84px">プロジェクトを</span>全<span class="k" style="margin-right:-3.12px">て</span>保存(<u>C</u>)...</span><span class="t" id="L61" style="right:871px;top:218.0px;font-size:12px;color:#b8b8b8;font-family:'Liberation Sans',sans-serif;transform-origin:100% 50%;transform:scaleX(0.989);">Ctrl+Shift+E</span>
<div class="a" style="left:176px;top:248px;width:250px;height:1px;background:#484848;"></div>
<span class="t" id="L62" style="left:178px;top:258.0px;font-size:12px;color:#636363;transform:scaleX(0.968);"><span class="k" style="margin-right:-18.72px">プロジェクト</span>設定(<u>P</u>)...</span>
<span class="t" id="L63" style="left:178px;top:290.0px;font-size:12px;color:#b8b8b8;transform:scaleX(0.968);">環境設定(<u>T</u>)...</span><span class="t" id="L64" style="right:871px;top:290.0px;font-size:12px;color:#b8b8b8;font-family:'Liberation Sans',sans-serif;transform-origin:100% 50%;transform:scaleX(0.856);">F5</span>
<div class="a" style="left:176px;top:320px;width:250px;height:1px;background:#484848;"></div>
<span class="t" id="L65" style="left:178px;top:330.0px;font-size:12px;color:#b8b8b8;transform:scaleX(0.943);">書<span class="k" style="margin-right:-3.12px">き</span>出<span class="k" style="margin-right:-3.12px">し</span>(<u>E</u>)...</span><span class="t" id="L66" style="right:871px;top:330.0px;font-size:12px;color:#b8b8b8;font-family:'Liberation Sans',sans-serif;transform-origin:100% 50%;transform:scaleX(0.950);">Ctrl+E</span>
<span class="t" id="L67" style="left:178px;top:362.0px;font-size:12px;color:#b8b8b8;transform:scaleX(0.959);"><span class="k" style="margin-right:-28.08px">スナップショットを</span>保存(<u>F</u>)...</span><span class="t" id="L68" style="right:871px;top:362.0px;font-size:12px;color:#b8b8b8;font-family:'Liberation Sans',sans-serif;transform-origin:100% 50%;transform:scaleX(0.974);">Shift+S</span>
<div class="a" style="left:167px;top:388px;width:262px;height:32px;background:#444444;"></div><span class="t" id="L69" style="left:178px;top:394.0px;font-size:12px;color:#ffffff;transform:scaleX(0.985);">選択<span class="k" style="margin-right:-21.84px">したクリップを</span>書<span class="k" style="margin-right:-3.12px">き</span>出<span class="k" style="margin-right:-3.12px">す</span>...</span>
<span class="t" id="L70" style="left:178px;top:426.0px;font-size:12px;color:#b8b8b8;transform:scaleX(0.959);">書<span class="k" style="margin-right:-3.12px">き</span>出<span class="k" style="margin-right:-21.84px">しフォルダーを</span>開<span class="k" style="margin-right:-3.12px">く</span>(<u>L</u>)...</span>
<span class="t" id="L71" style="left:178px;top:458.0px;font-size:12px;color:#b8b8b8;transform:scaleX(0.968);"><span class="k" style="margin-right:-43.68px">スナップショットフォルダーを</span>開<span class="k" style="margin-right:-3.12px">く</span>(<u>M</u>)</span>
<div class="a" style="left:176px;top:488px;width:250px;height:1px;background:#484848;"></div>
<span class="t" id="L72" style="left:178px;top:498.0px;font-size:12px;color:#b8b8b8;transform:scaleX(0.987);"><span class="k" style="margin-right:-15.60px">プログラム</span>終了(<u>X</u>)</span><span class="t" id="L73" style="right:871px;top:498.0px;font-size:12px;color:#b8b8b8;font-family:'Liberation Sans',sans-serif;transform-origin:100% 50%;">Alt+F4</span>
</body></html>
